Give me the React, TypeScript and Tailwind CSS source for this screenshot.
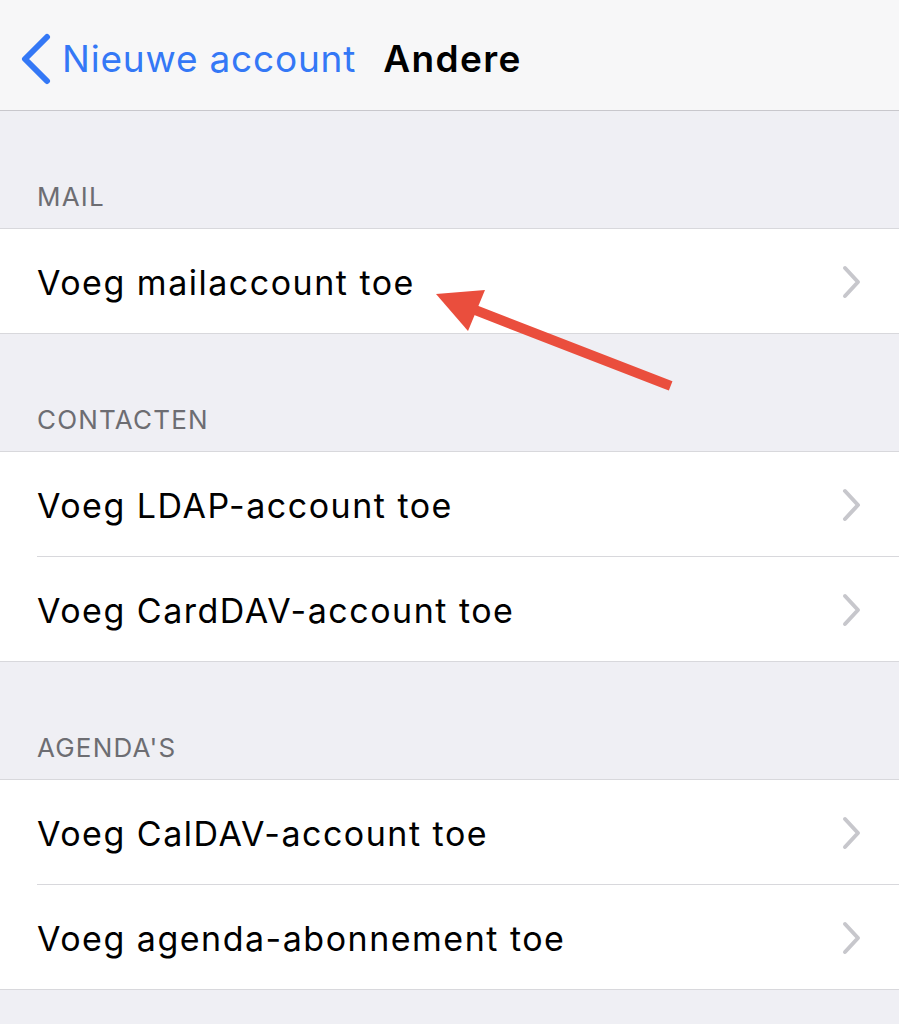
const font = { fontFamily: 'Inter, "Noto Sans", sans-serif' };

type Section = {
	title: string;
	rows: string[];
};

const sections: Section[] = [
	{ title: 'MAIL', rows: ['Voeg mailaccount toe'] },
	{ title: 'CONTACTEN', rows: ['Voeg LDAP-account toe', 'Voeg CardDAV-account toe'] },
	{ title: "AGENDA'S", rows: ['Voeg CalDAV-account toe', 'Voeg agenda-abonnement toe'] },
];

function Chevron() {
	return (
		<svg width="22" height="34" viewBox="0 0 22 34" className="shrink-0">
			<path d="M4 3 L17 17 L4 31" fill="none" stroke="#c7c7cc" strokeWidth="4" strokeLinecap="round" strokeLinejoin="round" />
		</svg>
	);
}

function Row({ label, last }: { label: string; last: boolean }) {
	return (
		<div className={`flex h-[105px] items-stretch bg-white pl-[37px] ${last ? 'border-b border-[#d8d8dc]' : ''}`}>
			<div className={`flex flex-1 items-center justify-between pr-[36px] pt-[2px] ${last ? '' : 'border-b border-[#d8d8dc]'}`}>
				<span className="text-[34px] tracking-[1.5px] text-black">{label}</span>
				<Chevron />
			</div>
		</div>
	);
}

export default function App() {
	return (
		<div className="relative h-[1024px] w-[899px] overflow-hidden bg-[#efeff4]" style={font}>
			<header className="flex h-[111px] items-center border-b border-[#c8c7cc] bg-[#f7f7f8] pl-[20px] pt-[8px]">
				<svg width="32" height="52" viewBox="0 0 32 52">
					<path d="M27 4 L5 26 L27 48" fill="none" stroke="#3478f6" strokeWidth="6" strokeLinecap="round" strokeLinejoin="round" />
				</svg>
				<span className="ml-[10px] text-[37px] tracking-[0.8px] text-[#3478f6]">Nieuwe account</span>
				<span className="ml-[27px] text-[37px] font-semibold tracking-[1.4px] text-black">Andere</span>
			</header>

			{sections.map((s) => (
				<section key={s.title}>
					<div className="flex h-[117px] items-end pb-[12px] pl-[37px] text-[26px] tracking-[1.2px] text-[#6d6d72]">{s.title}</div>
					<div className="border-t border-[#d8d8dc]">
						{s.rows.map((r, i) => (
							<Row key={r} label={r} last={i === s.rows.length - 1} />
						))}
					</div>
				</section>
			))}

			<svg className="absolute left-0 top-0" width="899" height="1024" viewBox="0 0 899 1024">
				<line x1="666" y1="384" x2="475" y2="310" stroke="#ea4e3d" strokeWidth="10" strokeLinecap="square" />
				<polygon points="436,294 485,290 468,331" fill="#ea4e3d" />
			</svg>
		</div>
	);
}
